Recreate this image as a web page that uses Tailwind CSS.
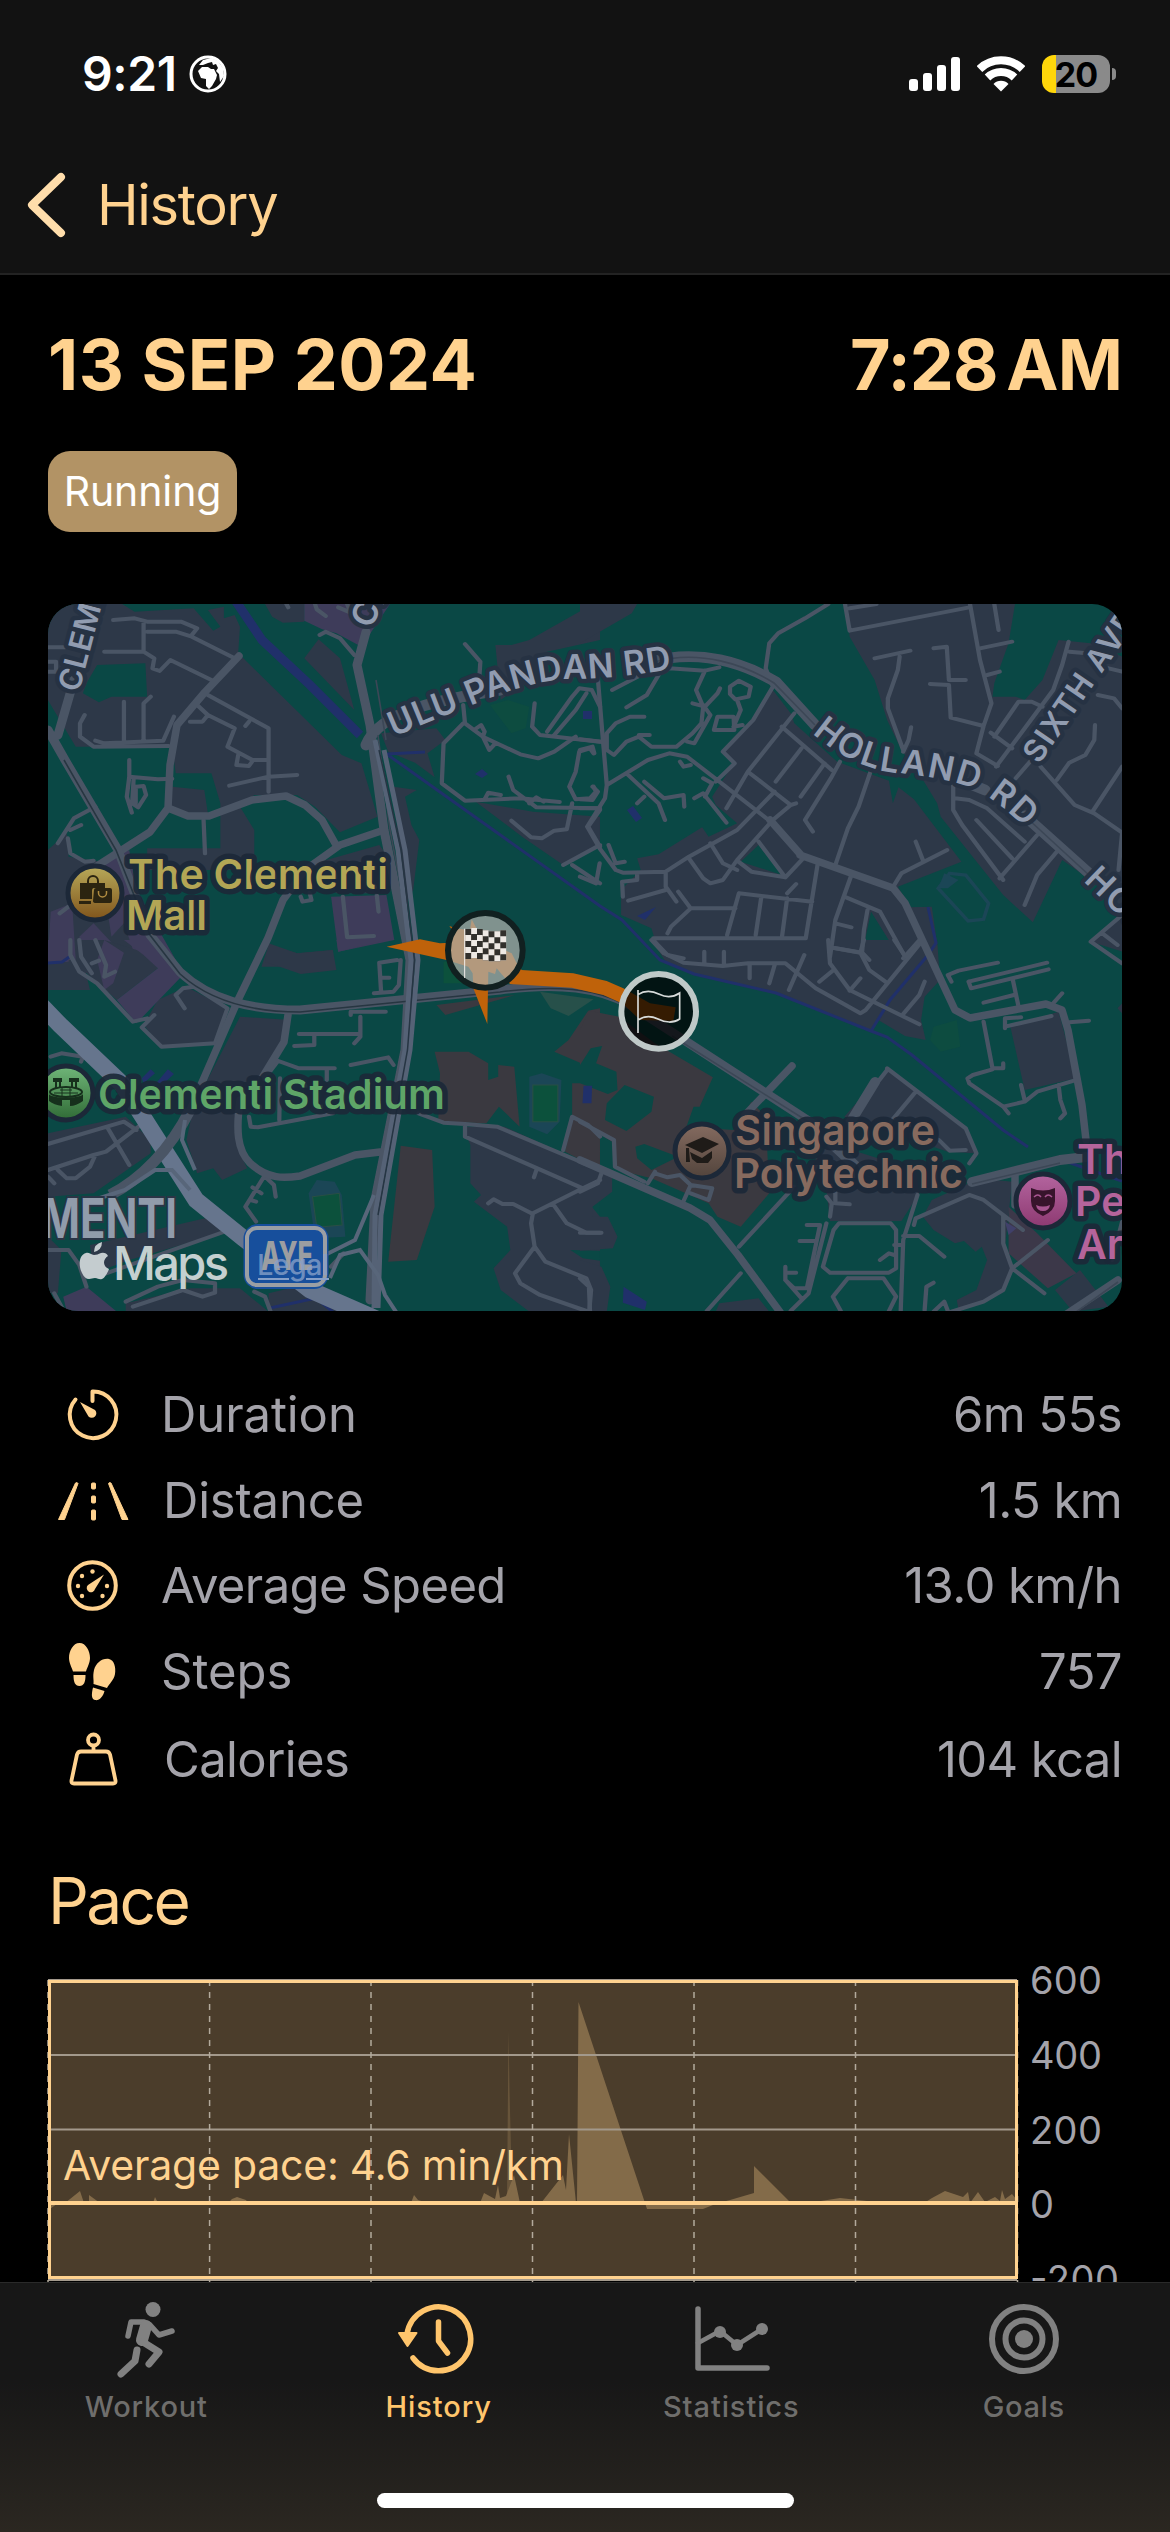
<!DOCTYPE html>
<html lang="en">
<head>
<meta charset="utf-8">
<title>Workout history</title>
<script src="https://cdn.jsdelivr.net/npm/@tailwindcss/browser@4"></script>
</head>
<body class="bg-black">
<div class="flex h-[2532px] w-[1170px] flex-col overflow-hidden bg-black font-[Inter,sans-serif] text-[#ffd28f]">

<header class="flex h-[275px] shrink-0 flex-col border-b-2 border-[#232323] bg-[#121212]">
  <div class="flex h-[148px] items-center justify-between pr-[54px] pl-[82px] text-white">
    <div class="flex items-center gap-[12px]">
      <span class="text-[48px] font-semibold tracking-[-0.4px]">9:21</span>
      <svg class="size-[38px]" viewBox="0 0 38 38"><circle cx="19" cy="19" r="17" fill="none" stroke="#fff" stroke-width="3"/><path fill="#fff" d="M10 10 14 5 22 3 29 6 34 13 35 21 31 27 30 19 27 16 29 13 27 9 24 10 23 7 19 8 14 10zM9 16 13 12 19 12 22 14 25 14 28 20 27 24 23 31 20 34 17 31 17 24 12 23z"/></svg>
    </div>
    <div class="flex items-center gap-[17px]">
      <svg class="h-[38px] w-[51px]" viewBox="0 0 51 38" fill="#fff"><rect y="24" width="9" height="12" rx="3"/><rect x="14" y="18" width="9" height="18" rx="3"/><rect x="28" y="10" width="9" height="26" rx="3"/><rect x="42" y="2" width="9" height="34" rx="3"/></svg>
      <svg class="h-[38px] w-[48px]" viewBox="0 0 48 38" fill="none" stroke="#fff" stroke-width="8"><path d="M2.500 14a31 31 0 0 1 43 0M10.500 22.500a19.500 19.500 0 0 1 27 0"/><path fill="#fff" stroke="none" d="M24 36.500 16.500 29a10.500 10.500 0 0 1 15 0z"/></svg>
      <div class="flex items-center gap-[2px]">
        <div class="flex h-[38px] w-[68px] items-center justify-center rounded-[12px] bg-linear-to-r from-[#ffd60a] from-21% to-[#8a8a8a] to-21%"><span class="text-[34px] font-bold tracking-[-1px] text-black">20</span></div>
        <div class="h-[12px] w-[4px] rounded-r-full bg-[#8a8a8a]"></div>
      </div>
    </div>
  </div>
  <div class="flex h-[114px] items-center pl-[25px]">
    <svg class="h-[70px] w-[72px]" viewBox="0 0 72 70" fill="none" stroke="#ffddab" stroke-width="8" stroke-linecap="round" stroke-linejoin="round"><path d="M36 7 7 35 36 63"/></svg>
    <span class="text-[56px] tracking-[-1.3px]">History</span>
  </div>
</header>

<main class="flex h-[2007px] shrink-0 flex-col overflow-hidden">
  <div class="flex h-[178px] items-center justify-between px-12 text-[70px] font-bold"><h1 class="tracking-[0.5px]">13 SEP 2024</h1><span class="tracking-[-0.9px]">7:28<span class="text-[40px]">&nbsp;</span>AM</span></div>
  <div class="-mt-[2px] ml-12 flex h-[81px] w-[189px] shrink-0 items-center justify-center rounded-[22px] bg-[#b29365] text-[41px] tracking-[-0.1px] text-white">Running</div>

  <svg class="mt-[72px] ml-12 h-[707px] w-[1074px] shrink-0 rounded-[30px] bg-[#0a4845]" viewBox="48 604 1074 707">
    <defs>
      <linearGradient id="gold" x2="0" y2="1"><stop stop-color="#b8aa5a"/><stop offset="1" stop-color="#80541b"/></linearGradient>
      <linearGradient id="green" x2="0" y2="1"><stop stop-color="#70b679"/><stop offset="1" stop-color="#306b36"/></linearGradient>
      <linearGradient id="tan" x2="0" y2="1"><stop stop-color="#856b60"/><stop offset="1" stop-color="#52443c"/></linearGradient>
      <linearGradient id="pink" x2="0" y2="1"><stop stop-color="#b4659f"/><stop offset="1" stop-color="#8d3971"/></linearGradient>
      <path id="r1" d="M79 693 111 570"/><path id="r2" d="M373 630 Q378 605 400 588"/>
      <path id="r3" d="M394 737 Q430 721 465 708 Q530 680 570 679 Q620 679 690 666"/>
      <path id="r4" d="M812 733 Q850 766 890 772 Q940 777 970 787 Q1000 800 1042 845"/>
      <path id="r5" d="M1039 765 1145 610"/><path id="r6" d="M1083 881 1140 936"/>
      <g id="ck"><path fill="#eee9e4" d="M0 0h17.500v90h-17.500z"/><path fill="#32302c" d="M0 0h17.500v18h-17.500zM0 36h17.500v18h-17.500zM0 72h17.500v18h-17.500z"/></g>
      <g id="ck2"><path fill="#32302c" d="M0 0h17.500v90h-17.500z"/><path fill="#eee9e4" d="M0 0h17.500v18h-17.500zM0 36h17.500v18h-17.500zM0 72h17.500v18h-17.500z"/></g>
    </defs>

    <!-- land use: north west -->
    <g transform="translate(40 590) scale(.35714 .33333)" fill="#2d3848">
      <path d="M22 42H230L265 65 430 55 485 122 505 110 470 60 515 50V85L545 75 560 110 555 190 845 495 900 520 945 680 840 727 770 650 720 615H600L560 650 600 720V840H300V775H505V640L480 550H380L370 470H100L22 330ZM370 590 460 600 470 670 410 682 365 650ZM630 42H740V95L680 98 650 80ZM780 148 840 205 880 360 740 205ZM1275 165 1320 165 1370 150 1568 30V150L1420 185 1380 260 1290 330ZM955 430 1110 415 1135 450 1085 490 1105 562 1050 518 975 485ZM990 590 1055 600 1022 620 1040 705 1062 750 1045 900 1020 950ZM1220 635 1380 665 1568 680V770L1465 825 1350 740ZM640 1065 720 1090 820 1080V1130H620ZM770 820 950 765 975 800V910H830ZM22 780 75 730 80 800 200 820 260 900 340 1110H22Z"/>
      <path fill="#3e3c5a" d="M740 42H980L900 170 830 130 790 118 740 92ZM815 920 970 915 992 1050 835 1085ZM30 965 90 940 100 1110H22ZM185 810 250 780 270 900 380 1110H270L235 1000 200 1040 180 900ZM110 1040 150 1000 220 1080 205 1130 120 1120Z"/>
      <path fill="#0a4845" d="M130 280 160 225 295 220 300 320H200L165 337 120 310Z"/>
      <path fill="#0d4c40" d="M1260 345 1310 330 1370 350 1360 415 1320 430Z"/>
    </g>
    <!-- land use: north east -->
    <g transform="translate(580 590) scale(.35714 .33333)" fill="#2d3848">
      <path d="M0 42H160L145 70 0 160ZM745 42H1218L1200 160 1160 280 1155 320H1220L1245 330 1295 270 1340 150 1430 160 1518 200V960L1430 870 1350 810 1268 997 1185 915 1010 680 1000 640 955 560 900 480 860 390 825 270 755 140ZM540 300 590 370 600 400 720 515 865 572 876 640 892 592 935 628 1068 815 890 890 925 952 985 950 1000 1060 995 1130H330L210 1050 200 1015 115 975V900L170 840 160 805 220 793 342 712 360 740 440 700 380 645 370 620 430 520 400 480 480 390ZM1430 1055 1518 970V1085Z"/>
      <path fill="#0a4845" d="M500 765 565 855 450 815ZM815 965 870 1060 820 1130 790 1090Z"/>
      <path fill="none" stroke="#1b4656" stroke-width="10" d="M1035 850 1080 855 1144 940 1130 988 1087 993 1003 895Z"/><path fill="#1b4656" d="M1020 850 1060 870 1030 895 1003 895Z"/>
    </g>
    <!-- land use: south west -->
    <g transform="translate(40 940) scale(.35714 .33333)" fill="#2d3848">
      <path d="M22 60H120L140 150H22ZM100 0H180L300 40 330 85 215 180 120 90ZM640 10 720 40 820 30 830 90 730 102 630 65ZM410 140 525 205 490 310 340 320 290 255 330 180ZM560 230 700 240 690 300 550 530 560 640 580 685 510 720 485 685 440 700 410 600 430 500ZM22 580 240 530 310 600V640L150 760 22 770ZM140 915 480 830 540 870 250 960 150 1000ZM22 890 60 930 50 1060 22 1060ZM240 1090 420 1045 560 1045 640 1115H240ZM640 1060 760 1030 820 1080 850 1115H640ZM1185 560 1300 560 1568 690V1115H1370L1290 1050 1270 985 1317 930 1308 860 1215 785 1235 765 1205 730V615Z"/>
      <path fill="#3e3c5a" d="M22 0H90L80 65 22 70ZM235 0H330L405 100 270 250 215 180 330 85 290 45ZM180 0 235 38 205 130 180 150 160 60ZM65 1070 130 1040 215 1115H75ZM830 0 970 0 835 35Z"/>
      <path fill="#3a3940" d="M1105 335H1200L1255 370V420L1283 410V375L1328 380 1343 560 1285 500 1250 550 1115 545 1120 400ZM1010 617 1098 630 1105 800 1055 960 975 965ZM1110 195 1330 165 1135 225ZM1568 205 1535 212 1480 300 1440 335 1525 374 1568 310ZM1490 430H1568V690L1470 635 1490 540Z"/>
      <path fill="#27504a" d="M1400 155 1550 178 1480 228 1430 205Z"/><path fill="#0c513c" d="M1130 65 1160 60 1200 130H1130Z"/>
      <path fill="#1b4656" d="M1370 410 1405 400 1460 420 1455 545 1420 583 1370 560ZM775 720 825 725 845 765 855 890 770 895 752 760Z"/>
      <path fill="#0c513c" stroke="#294f45" stroke-width="3" d="M1380 435H1450V545H1380ZM763 770 838 760 846 855 775 862Z"/>
      <path fill="#0a4845" d="M1485 930 1568 932V962L1520 955ZM1545 800 1568 780V830Z"/>
      <path fill="#20306a" d="M285 415 310 388 322 400 290 430ZM325 430 358 388 375 402 345 432ZM1522 437H1546V490H1520Z"/>
    </g>
    <!-- land use: south east -->
    <g transform="translate(580 940) scale(.35714 .33333)" fill="#2d3848">
      <path d="M200 0H1000L1008 120 965 170 955 240 968 300 910 288 835 240 815 272 550 160 320 100 240 65ZM860 385 1080 570 1105 640 1030 635 740 530ZM1205 260 1340 215 1390 415 1245 450ZM640 680 700 610 940 690 950 760 900 843H700L690 750ZM985 780 1120 715 1210 725 1190 920 1215 985 1180 1060 1060 1110 1055 1080 1110 1050 1140 960 1125 920 1108 935 1075 903 1050 910 990 870 960 830ZM0 680 90 700V755L35 800V830H78L105 890 92 925 0 932ZM0 960 60 980 85 1040 75 1115H0ZM1330 1050 1400 990 1480 1100 1380 1115ZM390 1090 500 1075 530 1115H380ZM1505 205 1518 190V220Z"/>
      <path fill="#3a3940" d="M0 270 25 212 110 230 210 310 372 412 335 500 318 500 298 560 430 570 480 485 520 530 530 760 450 860 385 830 360 790 200 715 105 690 90 605 0 545Z"/>
      <path fill="#3c3849" d="M1200 800 1280 880 1390 1000 1310 1045 1200 940Z"/><path fill="#40406a" d="M1190 845 1222 865 1200 885Z"/>
      <path fill="#0a4845" d="M62 318 45 370 102 395 105 450 78 462 0 430V375L30 325ZM125 435 207 470 200 515 130 573 70 540 75 490ZM155 620 180 612 275 650 200 690 160 655Z"/>
      <path fill="#0d4c40" d="M990 260 1055 240 1065 320 1010 335 980 300Z"/>
      <path fill="#20306a" d="M10 437H34L32 490H7ZM122 1040 187 1085 182 1110 120 1088Z"/>
    </g>

    <!-- water -->
    <g fill="none" stroke="#20306a" stroke-width="3">
      <path stroke-width="9" d="M235 600 262 640 310 685 360 735"/>
      <path d="M387 754 425 752M388 755 600 906 622 920 660 960 694 974 776 993 871 1031 887 1037 912 1055 1003 1130 1028 1147M871 1031 890 1000 928 955 936 943 928 907M1062 1160 1122 1181M48 963 62 962 72 955M270 1308 316 1298 333 1312"/>
      <path stroke="none" fill="#20306a" d="M475 774 482 769 488 774 482 778ZM583 711H592V719H583ZM627 810 633 806 642 818 636 822ZM637 916 656 907 645 920Z"/>
    </g>

    <!-- local streets -->
    <g fill="none" stroke="#4a5565" stroke-width="12" stroke-linecap="round" stroke-linejoin="round">
      <g transform="translate(40 590) scale(.35714 .33333)">
        <path d="M205 90 265 85 300 95H395L440 115 425 135M290 95V180M180 185H290L320 205 315 235 335 243 365 210 490 275M300 125H380L425 140 545 205M22 172H70M22 215H45V245H22M235 335V455M310 320 290 340V455M125 375 112 400V440L150 470 360 468M155 452 180 460 345 452 375 380M440 345 470 375 455 395H420M470 375 545 415 525 470 595 510H640M555 495 550 525 585 528 597 510M470 315 640 415V605M585 395 575 408M530 587 640 560 720 555M250 510V560L330 568 370 566M250 560 243 620 257 668M262 570 258 640 275 652 297 615 290 588 268 590V640M458 690 462 790M50 760 95 685 155 650M78 745 85 790 125 815 150 812M85 720 115 705M690 42 695 52M770 42 775 58 800 78M835 52 870 68 860 42M783 135 800 125 840 145 880 195M1190 162 1233 215 1230 265M1185 345 1190 400 1240 440 1345 493 1395 505 1440 485 1500 440M1185 400 1130 460 1125 580 1190 632 1345 625 1455 636M1215 420 1235 405 1245 425 1240 440 1258 480 1275 460M1385 340 1378 410 1400 435 1568 455M1420 425 1490 320 1510 295 1545 300 1568 350M1440 435 1500 360 1530 310M1312 560 1325 600 1390 652 1568 655M1245 628 1255 608 1290 615M1370 640 1390 622 1410 635M1320 692 1375 742 1405 745 1440 722 1475 718 1490 640M1550 490 1540 475 1510 485 1500 545 1482 590 1500 628 1540 625 1557 605 1550 590M1568 660 1535 710 1568 770M1465 825 1568 765M1490 825 1568 880M848 920 860 1042 935 1038M943 915 948 965M730 920 735 935 760 930 755 908M55 970 80 950"/>
      </g>
      <g transform="translate(580 590) scale(.35714 .33333)">
        <path d="M695 42 630 85 555 130 530 160 520 235 540 290 485 390 400 485 433 520 380 575M742 42 755 122 1090 52M755 55 830 42M1160 42 1172 120M1120 175 1210 155M1140 255 1175 245M1092 42 1120 210 1152 340 1130 408M825 205 925 182M895 200 890 240 862 325V355L905 480M927 412 920 450 905 485M990 175 1027 170 1033 270 1080 270M980 282 1033 285 1038 383 1130 408 1110 490 1170 528M1160 440 1228 335H1265L1295 350M1150 428 1210 475M1368 155 1350 225 1325 300 1165 530M1370 185 1420 190M1480 235 1518 245M1450 315 1495 325 1518 355M1442 405 1440 450 1415 495 1370 518 1335 570M1518 530 1435 665M1290 530 1385 645 1440 670 1518 728 1508 840M90 300 165 258 250 235 350 242 390 232M130 352 187 315 220 255M350 242 325 300 345 350 340 400 315 430 270 470H200L165 440 130 455 95 495 75 480V430L100 400 140 380H180M165 435H195M345 345 365 375 320 460 300 455M315 340 350 350 385 310 392 295M420 290 445 272 478 290 472 320 435 328 420 312ZM440 330 450 360 430 410 455 405M375 420 385 380 430 380 432 420ZM75 585 65 460 50 265M75 585 70 625 20 710 55 775 100 840 120 848 240 845 305 800 440 720 545 605M0 448 60 455M0 480 35 470 40 490M35 590 50 605 35 630 0 628M0 655H50M130 550 220 640 238 690M180 575 235 625 290 615 292 650M160 640 180 620M320 625 345 610 410 698M345 565 370 580 350 620M600 370 470 545 410 655M565 410 705 540M620 475 548 575M685 520 618 620M728 515 705 560 630 690 652 725M470 545 590 645 605 640M590 645 540 690 440 810 400 870 365 880 345 865 305 805M365 760 400 820 440 840M440 812 480 845 575 862 625 805M500 755 575 862M815 540 780 650 750 715 715 825M940 755 960 810M1028 780 900 850 880 885M1045 570V660L1070 705 1185 870M1110 690 1210 805M1050 625 1090 630 1140 655 1245 755M1280 735 1175 865M1335 785 1280 855 1245 945M1260 515 1220 565M665 825 632 1045H205L205 1050 245 1095 290 1105M445 910 650 935M445 910 412 1035M508 918 492 1035M580 925 565 1045M580 910 605 882M245 1030 255 1010 310 955 435 955M310 955 275 905M120 920 118 875 160 870V850M240 850V890L270 935M135 932 240 900M80 765 100 820 125 815M0 860 45 880 55 820M760 855 715 990 700 1100M740 920 840 965 910 1100M805 960 795 1020 790 1085M715 1000 760 1012M700 1072 790 1088 810 1110M955 1045 905 1105M1518 975 1430 1055 1518 1120M1460 1028 1505 1065M280 515 290 530 310 525M75 585 190 510 250 490 300 500 360 550 540 700 620 800"/>
      </g>
      <g transform="translate(40 940) scale(.35714 .33333)">
        <path d="M85 0V45L110 95 160 130 260 245 300 235M110 0 115 50 145 100M155 0 185 75 180 110 210 95M145 70 165 62M405 205 380 165 400 145 430 140 525 205 490 310 340 320 285 262 320 225M870 225V215H968M897 230V290L880 310M725 282H897M768 285V315L712 318M870 375 975 352 990 375M660 360 725 385H825M803 385V420M665 365 640 400M672 415 670 540M585 530 590 560 610 562 820 520M950 68 955 155M1000 60 950 68M955 113H978M1010 60 1005 135 990 155 935 160M30 350 60 340 120 350 115 365M22 612 235 545 270 570M190 565 250 675M22 690 150 645 185 635 300 540M50 690 75 715 100 715 140 680 155 645M22 710 40 730M630 705 575 800 605 845M595 742 620 760M590 780 605 785M630 710 655 735 660 770M1060 520 1130 548 1190 552 1280 560 1568 690M1190 555V590L1520 745 1568 720M1390 690 1383 712M1520 745 1380 820 1375 850 1385 920 1330 1000 1345 1030 1400 1065 1530 1113M1435 790 1475 850 1530 878H1568M1385 920 1415 965 1530 1015 1543 1050 1538 1113M1255 790 1270 778 1295 792H1325L1380 822M1465 630 1490 530 1535 555 1568 590M240 1085 330 1040 400 1020 490 1030V1058L455 1070 400 1050 330 1075 260 1100M600 1055 630 1070 645 1113M850 940 815 980M40 1060 65 1110M22 930H80L110 975 130 1040M185 1000 530 870"/>
      </g>
      <g transform="translate(580 940) scale(.35714 .33333)">
        <path d="M200 0 235 40 290 68 400 78 470 70H575L660 145 785 220 800 210 960 0M348 35V70M403 35V75M475 75V115M545 75 530 130M628 45 585 150M695 0 700 70 755 150 950 253M700 22 785 38 810 90 855 125M785 38 795 0M880 0 910 48M670 125 710 90M785 115 755 152M965 125 950 165 905 222M1040 125 1030 105 1060 92 1170 68M1088 125 1308 68M1088 125 1095 145 1312 88M1130 188 1215 165M1212 120 1228 200M1130 245 1155 385 1185 385V370M1090 430 1085 415 1100 405 1155 388M1090 430 1185 500 1245 485 1280 455 1395 418M1185 500 1200 520M1235 435 1245 480M1340 435 1345 480 1358 520 1345 535M1325 190 1350 160M1370 247 1425 242M1190 265V235L1235 232M1190 260 1320 228M760 530 780 500 860 390M860 385 1080 565 1110 640 1090 670M940 455 870 545M1005 600 1035 632 1080 630M445 920 600 740M715 750V790L755 793M690 770 705 790 700 830M945 765 905 900 898 1113M935 855 940 835 1090 765 1130 780 1185 825 1240 870M1185 825V910L1210 985 1185 1050 1130 1085 1040 1115M1210 985 1310 900M1210 985 1300 1060M905 888H950L1020 950M880 915H900M725 850H870L885 870V985L865 998H700L680 980 710 870ZM840 960 865 940 880 945M750 1015H850L885 1070 865 1113M750 1015 708 1070 730 1113M635 855H672L635 1045H600L575 1020V980M575 998H605M615 903H660M690 850 640 1060 590 1113M965 1110 970 1040 990 1028M990 1115 1020 1085 1030 1113M575 1020 620 1075M450 1000 355 1113M210 700 245 712 280 705 310 735 370 745 360 780 310 760M190 730 210 695M310 735 285 795M0 545 95 600 98 680 180 725M60 700 50 730 0 755M0 878H60M0 1015 25 1040 28 1113M1518 845 1490 960"/>
      </g>
    </g>

    <!-- main roads -->
    <g fill="none" stroke="#4a5565" stroke-width="7.500" stroke-linecap="round" stroke-linejoin="round">
      <path d="M239 656 205 692 177 725 170 765 168 808 188 816 209 816 252 800 286 796 305 805 322 820 336 845M168 808 150 832 97 866M384 830 340 845 305 870 283 900 268 938 238 1000M580 1160 690 1208 710 1220 738 1255 780 1312M800 855 893 888 905 903 955 1010 970 1018 1046 1004 1062 1010 1068 1030 1082 1105 1086 1140M801 855 770 820M238 1000 190 1110M240 1100C236 1130 237 1150 250 1163C268 1180 285 1178 300 1176L355 1155 380 1152M288 1015 284 1042 262 1078M1015 1175V1205M1118 1280 1020 1345M745 1115 792 1066"/>
      <path stroke-width="9" d="M74 680 58 735M48 730 65 760 118 850 150 935 180 972C210 1000 250 1010 300 1010L500 990C560 982 600 988 630 1005L815 1125"/>
      <path stroke-width="9" d="M366 632 357 665 370 725 384 830 410 960 405 1050 375 1200 370 1300"/>
      <path stroke-width="11" d="M366 745C380 710 440 700 500 690M650 662C700 648 745 664 776 682L815 725M960 780 985 790M1025 816 1092 876"/>
      <path stroke-width="10" d="M972 1182 1060 1160 1086 1157M832 1144 860 1170M848 1126 875 1082"/>
    </g>
    <g fill="none" stroke="#273641" stroke-width="1.600">
      <path d="M64 760 116 850 150 935 180 974C210 1001 250 1012 300 1012L500 992C560 984 600 990 625 1005"/>
      <path stroke="#3c4756" d="M378 735 390 830 415 960 405 1050 380 1200 373 1310M654 662C700 649 745 665 774 683L815 725M672 1036 812 1124M972 1184 1060 1163M1027 818 1090 876M1118 1282 1030 1345M376 680 386 740"/>
    </g>
    <path fill="none" stroke="#556276" stroke-width="5" d="M375 740 398 850 411 960 405 1050 375 1215 374 1308M384 750 405 850 418 960 410 1050 381 1215 378 1308"/>
    <path fill="none" stroke="#263543" stroke-width="1.500" d="M379 750 401 850 414.500 960 407.500 1050 378 1215"/>
    <g fill="none" stroke="#66758d">
      <path stroke-width="17" d="M36 1000 60 1025 122 1084 150 1128 196 1200 243 1238 310 1290 390 1325"/>
      <path stroke="#4a5565" stroke-width="11" d="M190 1110C170 1150 140 1180 110 1195"/>
      <path stroke="#58667a" stroke-width="4" d="M100 1198 125 1190 155 1170 172 1170 190 1190M185 1120 182 1140 195 1170M325 1255 355 1240 374 1195M330 1278 340 1255 360 1250 378 1275 385 1295 400 1318"/>
    </g>

    <!-- road names -->
    <g fill="#919cb0" stroke="#263243" stroke-width="9" stroke-linejoin="round" paint-order="stroke" font-size="34" font-weight="600">
      <text font-size="31" letter-spacing=".5"><textPath href="#r1">CLEMENTI</textPath></text>
      <text><textPath href="#r2">CL</textPath></text>
      <text><textPath href="#r3" textLength="289">ULU PANDAN RD</textPath></text>
      <text><textPath href="#r4" textLength="239">HOLLAND RD</textPath></text>
      <text font-size="31" letter-spacing="1.500"><textPath href="#r5">SIXTH AVE</textPath></text>
      <text letter-spacing="2"><textPath href="#r6">HOL</textPath></text>
    </g>

    <!-- recorded route -->
    <g transform="translate(370 880) scale(.33333)">
      <path fill="#bf620a" d="M50 200 150 178 210 190 240 188 250 155 238 138 262 146 300 150 305 118 322 150 380 200 425 220 440 250 455 270 610 280 710 303 760 325 840 370 917 382 910 422 810 420 760 372 700 345 605 323 420 312 380 265 375 282 355 275 352 432 310 325 308 280 295 260 230 240Z"/>
      <circle cx="346" cy="211" r="112" fill="#aeaeaa" fill-opacity=".72" stroke="#112020" stroke-width="18"/>
      <path stroke="#f1eeea" stroke-width="3" d="M284 146V294"/>
      <use href="#ck" x="286" y="147"/><use href="#ck2" x="303.500" y="144"/><use href="#ck" x="321" y="147"/><use href="#ck2" x="338.500" y="151"/><use href="#ck" x="356" y="154"/><use href="#ck2" x="373.500" y="154"/><use href="#ck" x="391" y="151"/>
      <circle cx="866" cy="394" r="112" fill="#000" fill-opacity=".72" stroke="#bfc9c8" stroke-width="18"/>
      <path fill="none" stroke="#d7dad9" stroke-width="5" d="M804 330V459M804 344C825 330 848 333 868 343S910 352 929 339V417C910 430 885 428 866 418S825 406 804 420"/>
    </g>

    <!-- places -->
    <g stroke="#1c2838" stroke-width="5">
      <circle cx="95" cy="893" r="27" fill="url(#gold)"/><circle cx="66" cy="1093" r="27" fill="url(#green)"/><circle cx="702" cy="1151" r="27" fill="url(#tan)"/><circle cx="1043" cy="1201" r="27" fill="url(#pink)"/>
    </g>
    <path fill="#2b2410" d="M80 883H105V888H94Q92 888 92 891V899H80ZM79 901H91V904H79ZM94 890Q94 888 96 888H110Q112 888 112 890V901Q112 903 110 903H96Q93 903 93 901Z"/>
    <path fill="none" stroke="#2b2410" stroke-width="2" d="M88 884V881A5 5 0 0 1 98 881V884"/><path fill="none" stroke="#b08c40" stroke-width="1.500" d="M98.500 891V893A4 4 0 0 0 106.500 893V891"/>
    <path fill="#16301c" d="M53 1078H62V1082H53ZM69 1078H79V1082H69ZM49 1094C52 1099 80 1099 83 1094V1101Q76 1106 70 1106V1100H62V1106Q54 1105 49 1101Z"/><path fill="none" stroke="#16301c" stroke-width="2" d="M56 1082V1088M60 1082V1087M72 1082V1087M76 1082V1088"/><ellipse cx="66" cy="1092" rx="16" ry="5" fill="none" stroke="#16301c" stroke-width="2"/><path stroke="#16301c" d="M54 1093H78M60 1090H72M62 1088V1096M70 1088V1096"/>
    <path fill="#1f1b18" d="M685 1145 703 1137 719 1144 702 1153ZM690 1152 702 1158 712 1151V1158L708 1163H697L692 1159ZM686 1148H689L690 1162H686Z"/>
    <path fill="#38142c" d="M1031 1188Q1043 1193 1055 1188V1201Q1055 1211 1043 1216Q1031 1211 1031 1201Z"/><path fill="#a85591" d="M1036 1205Q1043 1208 1050 1205Q1049 1211 1043 1211Q1037 1211 1036 1205Z"/><path fill="none" stroke="#a85591" stroke-width="1.500" d="M1034 1197Q1038 1193 1041 1197M1045 1197Q1048 1193 1052 1197"/>
    <g stroke="#1c2838" stroke-opacity=".92" stroke-width="11" stroke-linejoin="round" paint-order="stroke" font-size="41" font-weight="600">
      <g fill="#b3a655"><text x="128" y="889" textLength="260">The Clementi</text><text x="126" y="930" textLength="81">Mall</text></g>
      <text x="98" y="1109" textLength="347" fill="#5ea567">Clementi Stadium</text>
      <g fill="#876a5e"><text x="735" y="1145" textLength="200">Singapore</text><text x="734" y="1188" textLength="229">Polytechnic</text></g>
      <g fill="#b5649b"><text x="1077" y="1174">The</text><text x="1075" y="1216">Perf</text><text x="1077" y="1259">Arts</text></g>
    </g>
    <text x="41" y="1238" textLength="136" lengthAdjust="spacingAndGlyphs" font-size="55" font-weight="700" fill="#919cab" stroke="#2a3546" stroke-width="4" paint-order="stroke">MENTI</text>
    <rect x="246" y="1226.500" width="80" height="60" rx="12" fill="#174f9c" stroke="#174f9c" stroke-width="5"/><rect x="247" y="1228" width="78" height="57" rx="10" fill="none" stroke="#9b9fa4" stroke-width="4"/>
    <text x="261" y="1270" textLength="52" lengthAdjust="spacingAndGlyphs" font-size="39" font-weight="800" fill="#9c9ea1">AYE</text>
    <text x="257" y="1275" textLength="72" font-size="29" font-weight="500" fill="#87a0c8" fill-opacity=".8">Legal</text><path stroke="#87a0c8" stroke-width="2" d="M258 1279H289M306 1279H329"/>
    <path fill="#c4cccf" d="M101 1253C98 1254 97 1255 94 1255S89 1252 86 1253C79 1255 78 1265 82 1273C84 1277 86 1279 89 1279S92 1278 95 1278 99 1280 102 1279 108 1272 109 1269C102 1266 103 1259 108 1256Q106 1252 101 1253ZM94 1252Q94 1244 102 1242Q102 1250 94 1252Z"/>
    <text x="113" y="1280" textLength="116" font-size="47" font-weight="500" fill="#c4d0d0">Maps</text>
  </svg>

  <section class="mt-[61px] mr-12 ml-12 flex shrink-0 flex-col text-[49px] tracking-[-0.6px] text-[#a4a3aa]">
    <div class="flex h-[86px] items-center"><svg class="h-20 w-[113px]" viewBox="48 1375 113 80" fill="none" stroke="#ffd28f" stroke-width="4" stroke-linecap="round" stroke-linejoin="round"><path d="M92.500 1401V1391.500A23.300 23.300 0 1 1 75.500 1399.500"/><path fill="#ffd28f" stroke="none" d="M80 1402 95 1410A4.500 4.500 0 1 1 88.500 1416.500Z"/></svg><span class="tracking-[-0.1px]">Duration</span><span class="ml-auto">6m 55s</span></div>
    <div class="flex h-[85px] items-center"><svg class="h-20 w-[115px]" viewBox="48 1460 115 80" fill="#ffd28f" stroke="#ffd28f" stroke-linejoin="round"><path d="M58.500 1518.500H64.500L78 1482.500Q77.500 1481 75.500 1482ZM128 1518.500H122L108.500 1482.500Q109 1481 111 1482Z"/><rect x="91.500" y="1482" width="4" height="6" rx="1"/><rect x="91.500" y="1495" width="4" height="7" rx="1"/><rect x="91.500" y="1509" width="4" height="10" rx="1"/></svg><span class="tracking-[-0.2px]">Distance</span><span class="ml-auto">1.5 km</span></div>
    <div class="flex h-[85px] items-center"><svg class="h-20 w-[113px]" viewBox="48 1545 113 80" fill="#ffd28f"><circle cx="92.500" cy="1584.500" r="23.300" fill="none" stroke="#ffd28f" stroke-width="4"/><circle cx="92.500" cy="1570.500" r="2.200"/><circle cx="82" cy="1575" r="2.200"/><circle cx="78" cy="1585" r="2.200"/><circle cx="82" cy="1595" r="2.200"/><circle cx="107" cy="1585" r="2.200"/><circle cx="102.500" cy="1595" r="2.200"/><path d="M104 1573.500 95 1588A4.200 4.200 0 1 1 88 1584Z"/></svg><span>Average Speed</span><span class="ml-auto">13.0 km/h</span></div>
    <div class="flex h-[88px] items-center"><svg class="h-20 w-[113px]" viewBox="48 1632 113 80" fill="#ffd28f"><path d="M79.500 1643C86 1643 90 1651 90 1658 90 1663 87 1668 86 1671.500H73C72 1668 69 1663 69 1658 69 1651 73 1643 79.500 1643ZM73.500 1675H85.500C85.500 1682 84 1686 79.500 1686S73.500 1682 73.500 1675Z"/><path d="M109 1659C114 1660 116 1667 115 1674 114 1680 109 1684 107 1688L93.500 1684C94 1679 92.500 1677 94 1670 96 1663 102 1658 109 1659ZM93 1687.500 104.500 1691C103 1697 99 1701 95 1700S91.500 1694 93 1687.500Z"/></svg><span class="tracking-[0px]">Steps</span><span class="ml-auto">757</span></div>
    <div class="flex h-[87px] items-center"><svg class="h-20 w-[116px]" viewBox="48 1719.500 116 80" fill="none" stroke="#ffd28f" stroke-width="3.800" stroke-linejoin="round"><circle cx="93.500" cy="1739.500" r="5.500"/><path d="M93.500 1745V1751M81 1751H106Q109 1751 110 1754L115.500 1780Q116 1783 113 1783H74Q71 1783 71.500 1780L77 1754Q78 1751 81 1751Z"/></svg><span>Calories</span><span class="ml-auto">104 kcal</span></div>
  </section>

  <h2 class="mt-[57px] ml-12 flex h-[82px] shrink-0 items-center text-[64px] tracking-[-2.600px]">Pace</h2>
  <svg class="h-[340px] w-full shrink-0" viewBox="0 1942 1170 340">
    <path fill="#4b3d2b" d="M48 1981H1017V2279H48z"/>
    <path fill="#836b49" d="M65 2203 80 2191 84 2203ZM89 2203V2195L100 2203ZM153 2203 155 2197 158 2203ZM228 2203 232 2199 237 2197 246 2200 248 2203ZM411 2203 414 2195 418 2200 428 2203ZM480 2203 484 2193 495 2199 498 2185 500 2198 506 2196 514 2175 520 2203ZM541 2203 563 2175 566 2190 569 2134 576 2203ZM577 2203 578.500 2002 645 2203 647 2209H703L718 2203 730 2200 754 2193V2166L791 2203ZM808 2203 840 2198 885 2203ZM924 2203 932 2198 945 2191 963 2197 968 2192 970 2203 978 2192 985 2202 995 2197 1000 2201 1002 2190 1005 2199 1012 2194 1017 2200V2203ZM48 2203H58L50 2209Z"/>
    <path fill="#836b49" fill-opacity=".5" d="M507 2200 508.500 2030 509.500 2090 512 2190Z"/>
    <g fill="none" stroke="#a3998c" stroke-width="2"><path d="M48 2055H1017M48 2129.500H1017M48 1980H1017M48 2280H1017"/><path stroke="#b3aa9c" stroke-width="1.500" stroke-dasharray="6 6" d="M48 1980V2282M209.600 1980V2282M371 1980V2282M532.500 1980V2282M694 1980V2282M855.500 1980V2282M1017.500 1980V2282"/></g>
    <rect x="49.500" y="1981.500" width="967" height="296" fill="none" stroke="#ffd28f" stroke-width="3"/>
    <path stroke="#ffd28f" stroke-width="4" d="M48 2203H1017"/>
    <text x="63" y="2180" font-size="41" fill="#ffd28f" textLength="501">Average pace: 4.6 min/km</text>
    <g font-size="38" fill="#a4a3aa"><text x="1030" y="1994" textLength="72">600</text><text x="1030" y="2069" textLength="72">400</text><text x="1030" y="2144" textLength="72">200</text><text x="1030" y="2218">0</text><text x="1030" y="2293" textLength="89">-200</text></g>
  </svg>
</main>

<nav class="flex h-[250px] shrink-0 flex-col items-center border-t border-[#2a2a2a] bg-linear-to-b from-[#171717] from-40% to-[#2b2721] text-[29px] font-medium text-[#6f6e6c]">
  <div class="flex h-[210px] w-full">
    <div class="flex flex-1 flex-col items-center"><svg class="mt-3 h-[90px] w-[100px]" viewBox="96 2295 100 90" fill="none" stroke="#818181" stroke-linecap="round" stroke-linejoin="round"><circle cx="153" cy="2309.500" r="7.500" fill="#818181" stroke="none"/><path stroke-width="5.500" d="M144 2322H131L128 2336M150 2325 159 2335 172 2331"/><path stroke-width="12" d="M146 2326 142 2340"/><path stroke-width="7" d="M143 2342 159 2352 149 2364M137 2350 135 2361 121 2374"/></svg><span class="tracking-[0.8px]">Workout</span></div>
    <div class="flex flex-1 flex-col items-center text-[#ffc56c]"><svg class="mt-3 h-[90px] w-[100px]" viewBox="389 2295 100 90" fill="none" stroke="#ffc56c" stroke-width="5.500" stroke-linecap="round" stroke-linejoin="round"><path d="M407 2334A32 32 0 1 1 413 2358M438.500 2322V2341L447.500 2353"/><path fill="#ffc56c" stroke-width="2" d="M399 2333H416.500L407.500 2346Z"/></svg><span class="tracking-[0.9px]">History</span></div>
    <div class="flex flex-1 flex-col items-center"><svg class="mt-3 h-[90px] w-[100px]" viewBox="681 2295 100 90" fill="none" stroke="#818181" stroke-width="5.500" stroke-linecap="round" stroke-linejoin="round"><path d="M698 2309V2368H767"/><path stroke-width="4.500" d="M698 2343 720 2331 737 2345 762 2329"/><g fill="#818181" stroke="none"><circle cx="720" cy="2332" r="6"/><circle cx="737" cy="2345" r="6"/><circle cx="762" cy="2329" r="6"/></g></svg><span class="tracking-[0.9px]">Statistics</span></div>
    <div class="flex flex-1 flex-col items-center"><svg class="mt-3 h-[90px] w-[100px]" viewBox="974 2295 100 90" fill="none" stroke="#818181" stroke-width="6"><circle cx="1024" cy="2339" r="32"/><circle cx="1024" cy="2339" r="18.500"/><circle cx="1024" cy="2339" r="9" fill="#818181" stroke="none"/></svg><span class="tracking-[0.6px]">Goals</span></div>
  </div>
  <div class="h-[15px] w-[417px] shrink-0 rounded-full bg-white"></div>
</nav>
</div>
</body>
</html>
